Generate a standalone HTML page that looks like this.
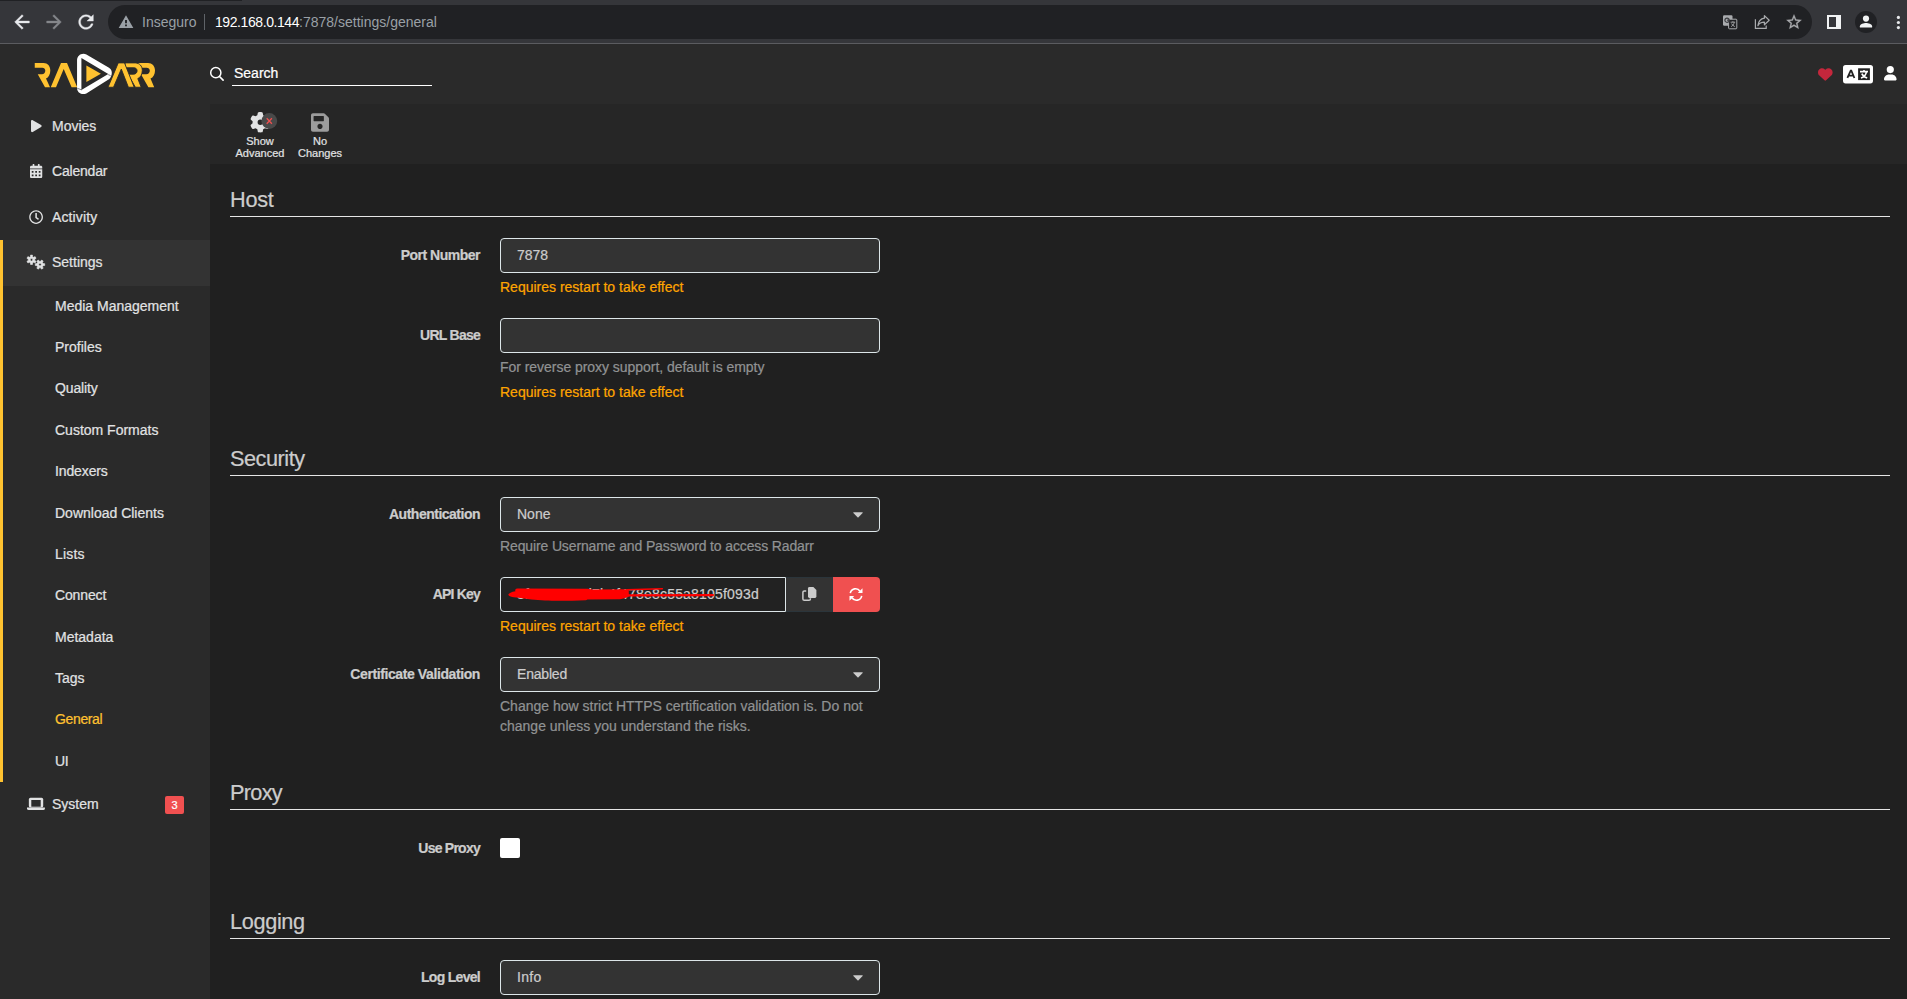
<!DOCTYPE html>
<html>
<head>
<meta charset="utf-8">
<title>General - Radarr</title>
<style>
*{box-sizing:border-box;margin:0;padding:0}
html,body{width:1907px;height:999px;overflow:hidden;background:#202020}
body{position:relative;font-family:"Liberation Sans",sans-serif;font-size:14px;color:#ccc;line-height:21px;-webkit-text-stroke:0.22px}
.abs{position:absolute}
svg{position:absolute;overflow:visible}
/* browser chrome */
#chrome{position:absolute;left:0;top:0;width:1907px;height:44px;background:#35363a}
#chrome .bline{position:absolute;left:0;top:43px;width:1907px;height:1px;background:#5b5c60}
#tabstrip{position:absolute;left:0;top:0;width:1907px;height:1px;background:transparent}
#tabstrip i{position:absolute;left:0;top:0;width:242px;height:1px;background:#202124}
#pill{position:absolute;left:108px;top:5px;width:1704px;height:34px;border-radius:17px;background:#202124}
.ctext{-webkit-text-stroke:0;position:absolute;top:11px;height:22px;line-height:22px;font-size:14px;white-space:nowrap}
/* app */
#header{position:absolute;left:0;top:44px;width:1907px;height:60px;background:#2a2a2a}
#sidebar{position:absolute;left:0;top:104px;width:210px;height:895px;background:#2a2a2a}
#toolbar{position:absolute;left:210px;top:104px;width:1697px;height:60px;background:#262626}
#content{position:absolute;left:210px;top:164px;width:1697px;height:835px;background:#202020}
.nav{position:absolute;left:52px;color:#e1e2e3;white-space:nowrap;line-height:21.4px;height:21.4px}
.sub{position:absolute;left:55px;color:#e1e2e3;white-space:nowrap;line-height:21.4px;height:21.4px}
.legend{position:absolute;left:230px;width:1660px;height:33px;border-bottom:1px solid #e5e5e5;font-size:21.7px;line-height:32px;color:#ccc;white-space:nowrap}
.label{margin-top:-1px;position:absolute;left:230px;width:250px;text-align:right;font-weight:bold;line-height:20px;height:20px;color:#ccc;white-space:nowrap;letter-spacing:-0.5px}
.input{position:absolute;left:500px;width:380px;height:35px;border:1px solid #dde6e9;border-radius:4px;background:#333;color:#ccc;padding:6px 16px;line-height:21px;white-space:nowrap}
.help{margin-top:-1px;position:absolute;left:500px;line-height:20px;height:20px;color:#909293;white-space:nowrap}
.warn{color:#ffa500}
.tbtxt{position:absolute;font-size:11px;line-height:12px;height:12px;color:#e1e2e3;text-align:center;width:60px;white-space:nowrap}
</style>
</head>
<body>
<div id="chrome">
  <div id="tabstrip"><i></i></div>
  <div class="bline"></div>
  <div id="pill"></div>
  <!-- back -->
  <svg style="left:11px;top:11px" width="22" height="22" viewBox="0 0 24 24"><path fill="#e8eaed" stroke="#e8eaed" stroke-width="0.45" d="M20 11H7.83l5.59-5.59L12 4l-8 8 8 8 1.41-1.41L7.83 13H20v-2z"/></svg>
  <!-- forward -->
  <svg style="left:43px;top:11px" width="22" height="22" viewBox="0 0 24 24"><path fill="#85878b" stroke="#85878b" stroke-width="0.45" d="M12 4l-1.41 1.41L16.17 11H4v2h12.17l-5.58 5.59L12 20l8-8z"/></svg>
  <!-- reload -->
  <svg style="left:75px;top:11px" width="22" height="22" viewBox="0 0 24 24"><path fill="#e8eaed" stroke="#e8eaed" stroke-width="0.4" d="M17.65 6.35C16.2 4.9 14.21 4 12 4c-4.42 0-7.99 3.58-7.99 8s3.57 8 7.99 8c3.73 0 6.84-2.55 7.73-6h-2.08c-.82 2.33-3.04 4-5.65 4-3.31 0-6-2.69-6-6s2.69-6 6-6c1.66 0 3.14.69 4.22 1.78L13 11h7V4l-2.35 2.35z"/></svg>
  <!-- warning -->
  <svg style="left:118px;top:13.7px" width="16" height="16" viewBox="0 0 24 24"><path fill="#9aa0a6" d="M1 21h22L12 2 1 21zm12.400-2.800h-2.800v-2.600h2.800v2.600zm0-4.400h-2.800v-4.800h2.800v4.800z"/></svg>
  <div class="ctext" style="left:142px;color:#9aa0a6">Inseguro</div>
  <div class="abs" style="left:204px;top:14px;width:1px;height:16px;background:#5f6368"></div>
  <div class="ctext" style="left:215px;color:#9aa0a6"><span style="color:#fff;letter-spacing:-0.42px">192.168.0.144</span>:7878/settings/general</div>
  <!-- translate -->
  <svg style="left:1722px;top:14px" width="16" height="16" viewBox="0 0 16 16">
    <rect x="1" y="1.2" width="9.5" height="10.6" rx="1.2" fill="#a9abae"/>
    <rect x="6.6" y="5.2" width="8.2" height="9.6" rx="0.8" fill="#202124" stroke="#a9abae" stroke-width="1"/>
    <circle cx="5" cy="6.2" r="2.1" fill="none" stroke="#3c3d41" stroke-width="1.2"/>
    <path d="M5 6.2h2.3" stroke="#3c3d41" stroke-width="1.1"/>
    <path d="M8.6 8.2h4.6M10.9 7.2v1M9.2 12.6c1.6-.9 2.7-2.4 3-4.2M9.6 9.6c.6 1.3 1.7 2.3 3.2 3" stroke="#a9abae" stroke-width="0.9" fill="none"/>
  </svg>
  <!-- share -->
  <svg style="left:1754px;top:14px" width="17" height="16" viewBox="0 0 17 16">
    <path d="M1.4 5.2V14.4H12.2V11.6" fill="none" stroke="#a9abae" stroke-width="1.2"/>
    <path d="M10.4 1.6L15.2 6.2 10.4 10.8V8.2C7.2 8.2 5.2 9.2 3.9 11.6 4.4 7.6 6.6 4.8 10.4 4.2Z" fill="none" stroke="#a9abae" stroke-width="1.2" stroke-linejoin="round"/>
  </svg>
  <!-- star -->
  <svg style="left:1785px;top:13.400px" width="18" height="18" viewBox="0 0 24 24"><path fill="#a9abae" stroke="#a9abae" stroke-width="0.400" d="M22 9.24l-7.19-.62L12 2 9.19 8.63 2 9.24l5.46 4.73L5.82 21 12 17.27 18.18 21l-1.63-7.03L22 9.24zM12 15.4l-3.76 2.27 1-4.28-3.32-2.88 4.38-.38L12 6.1l1.71 4.04 4.38.38-3.32 2.88 1 4.28L12 15.4z"/></svg>
  <!-- side panel -->
  <svg style="left:1827px;top:15px" width="14" height="14" viewBox="0 0 14 14"><rect x="1" y="1" width="12" height="12" fill="none" stroke="#f1f3f4" stroke-width="2"/><rect x="9" y="0" width="5" height="14" fill="#f1f3f4"/></svg>
  <!-- profile -->
  <svg style="left:1855px;top:11px" width="22" height="22" viewBox="0 0 22 22"><circle cx="11" cy="11" r="11" fill="#202124"/><circle cx="11" cy="7.6" r="3.1" fill="#f1f3f4"/><path d="M4.9 16.6v-1.3c0-2.1 4-3.2 6.1-3.2s6.100 1.100 6.100 3.200v1.300z" fill="#f1f3f4"/></svg>
  <!-- menu dots -->
  <svg style="left:1896px;top:15px" width="5" height="15" viewBox="0 0 5 15"><circle cx="2.4" cy="2.4" r="1.6" fill="#e8eaed"/><circle cx="2.4" cy="7.5" r="1.6" fill="#e8eaed"/><circle cx="2.4" cy="12.6" r="1.6" fill="#e8eaed"/></svg>
</div>
<div id="header"></div>
<!-- logo: coordinates are page pixels -->
<svg style="left:0;top:44px" width="210" height="60" viewBox="0 44 210 60">
  <g fill="#ffc230">
    <!-- R1 -->
    <path d="M34.75 62.9H43.6C47.6 62.9 50.3 66 50.3 70.4C50.3 74.3 48.6 77.4 46 78.6L50 87.25H45L37.75 74.2H42C43.9 74.2 45.3 72.7 45.3 70.8C45.3 69 44 67.75 42.3 67.75H34.75Z"/>
    <!-- A1 -->
    <path d="M61 62.9H67L77.2 87.25H71.6L63.7 69.1L56 87.25H50.75Z"/>
    <!-- R3 -->
    <path d="M138 62.9H148C152.100 62.900 155 66 155 70.400C155 74.300 153.200 77.400 150.500 78.600L154.200 87.250H148.400L141 74.200H146.300C148.300 74.200 149.800 72.700 149.800 70.800C149.800 69 148.400 67.750 146.600 67.750H138Z"/>
    <!-- R2 -->
    <path stroke="#2a2a2a" stroke-width="0.9" d="M125 62.9H135.300C139.400 62.900 142.300 66 142.300 70.400C142.300 74.300 140.500 77.400 137.800 78.600L141.200 87.250H135.400L128 74.200H133.600C135.600 74.200 137.100 72.700 137.100 70.800C137.100 69 135.700 67.750 133.900 67.750H125Z"/>
    <!-- A2 -->
    <path stroke="#2a2a2a" stroke-width="0.9" d="M118.250 62.900H124.500L134.200 87.250H128.400L121.300 69.100L113.500 87.250H108Z"/>
  </g>
  <!-- white rounded triangle (outer minus inner) -->
  <path fill="#ffffff" fill-rule="evenodd" d="M77.05 88V60.6C77.05 56.6 79.9 53.85 83.4 53.85C84.5 53.85 85.5 54.1 86.4 54.6L109 67.8C110.8 68.9 111.8 70.6 111.8 72.7C111.8 74.9 110.9 77.4 109.3 78.9L87.9 92.4C86.5 93.4 85 94.1 83.4 94.1C79.9 94.1 77.05 91.6 77.05 88Z M81.4 58.1L108.3 74L81.4 90.1Z"/>
  <path d="M77.3 88.3L81.8 89.9M110.6 75.6L108.2 74.6" stroke="#2a2a2a" stroke-width="0.6" fill="none"/>
  <!-- inner play -->
  <path d="M86.4 65.6L100.9 73.7L86.4 82.1Z" fill="#ffc230"/>
</svg>
<!-- search -->
<svg style="left:209px;top:66px" width="16" height="16" viewBox="0 0 16 16"><circle cx="6.800" cy="6.700" r="5.100" fill="none" stroke="#fff" stroke-width="1.500"/><path d="M10.500 10.500L14.100 14.100" stroke="#fff" stroke-width="1.700" stroke-linecap="round"/></svg>
<div class="abs" style="left:234px;top:63px;line-height:21px;color:#fff;white-space:nowrap">Search</div>
<div class="abs" style="left:232px;top:85px;width:200px;height:1px;background:#fff"></div>
<!-- heart -->
<svg style="left:1817.700px;top:66.600px" width="14.600" height="14.600" viewBox="0 0 512 512"><path fill="#c4273c" d="M47.600 300.400L228.300 469.100c7.500 7 17.400 10.900 27.700 10.900s20.200-3.900 27.700-10.900L464.400 300.400c30.400-28.300 47.600-68 47.600-109.500v-5.800c0-69.900-50.500-129.500-119.400-141C347 36.500 300.600 51.400 268 84L256 96 244 84c-32.600-32.600-79-47.500-124.600-39.900C50.500 55.600 0 115.200 0 185.100v5.800c0 41.500 17.200 81.200 47.600 109.500z"/></svg>
<!-- language -->
<svg style="left:1843px;top:64.700px" width="30" height="18.400" viewBox="0 0 30 18.400">
  <rect x="0" y="0" width="30" height="18.400" rx="2.600" fill="#fff"/>
  <rect x="15.100" y="3.300" width="11.800" height="11.800" fill="#222"/>
  <path d="M4.400 13L7.700 5.700H8.300L11.400 13M5.600 10.700H10.300" fill="none" stroke="#222" stroke-width="1.800"/>
  <path d="M17 6.600H25M21 5V6.600M18 13C21 12 23 9.600 23.400 6.800M18.800 8.600C19.700 10.600 21.600 12.200 24.200 13" fill="none" stroke="#fff" stroke-width="1.600"/>
</svg>
<!-- user -->
<svg style="left:1883.600px;top:65.700px" width="12.600" height="14.400" viewBox="0 0 448 512"><path fill="#fff" d="M224 256A128 128 0 1 0 224 0a128 128 0 1 0 0 256zm-45.700 48C79.800 304 0 383.800 0 482.300C0 498.700 13.300 512 29.700 512H418.300c16.400 0 29.700-13.300 29.700-29.700C448 383.800 368.200 304 269.700 304H178.300z"/></svg>

<div id="sidebar"></div>
<div class="abs" style="left:0;top:240px;width:210px;height:46px;background:#333"></div>
<div class="abs" style="left:0;top:240px;width:3px;height:542px;background:#ffc230"></div>
<!-- play -->
<svg style="left:31px;top:119.900px" width="10.700" height="12.200" viewBox="0 0 448 512"><path fill="#e1e2e3" d="M424.400 214.700L72.400 6.600C43.800-10.300 0 6.100 0 47.900V464c0 37.500 40.700 60.100 72.400 41.300l352-208c31.400-18.500 31.500-64.100 0-82.600z"/></svg>
<div class="nav" style="top:116px">Movies</div>
<!-- calendar -->
<svg style="left:29.900px;top:164px" width="12.250" height="14" viewBox="0 0 448 512"><path fill="#e1e2e3" d="M0 464c0 26.500 21.500 48 48 48h352c26.500 0 48-21.500 48-48V192H0v272zm320-196c0-6.600 5.400-12 12-12h40c6.600 0 12 5.400 12 12v40c0 6.600-5.400 12-12 12h-40c-6.600 0-12-5.400-12-12v-40zm0 128c0-6.600 5.400-12 12-12h40c6.600 0 12 5.400 12 12v40c0 6.600-5.400 12-12 12h-40c-6.600 0-12-5.400-12-12v-40zM192 268c0-6.600 5.400-12 12-12h40c6.600 0 12 5.400 12 12v40c0 6.600-5.400 12-12 12h-40c-6.600 0-12-5.400-12-12v-40zm0 128c0-6.600 5.400-12 12-12h40c6.600 0 12 5.400 12 12v40c0 6.600-5.400 12-12 12h-40c-6.600 0-12-5.400-12-12v-40zM64 268c0-6.600 5.400-12 12-12h40c6.600 0 12 5.400 12 12v40c0 6.600-5.400 12-12 12H76c-6.600 0-12-5.400-12-12v-40zm0 128c0-6.600 5.400-12 12-12h40c6.600 0 12 5.400 12 12v40c0 6.600-5.400 12-12 12H76c-6.600 0-12-5.400-12-12v-40zM400 64h-48V16c0-8.800-7.200-16-16-16h-32c-8.800 0-16 7.200-16 16v48H160V16c0-8.800-7.200-16-16-16h-32c-8.800 0-16 7.200-16 16v48H48C21.500 64 0 85.500 0 112v48h448v-48c0-26.500-21.500-48-48-48z"/></svg>
<div class="nav" style="top:161.400px;letter-spacing:-0.2px">Calendar</div>
<!-- clock -->
<svg style="left:28.800px;top:209.900px" width="14.200" height="14.200" viewBox="0 0 512 512"><path fill="#e1e2e3" d="M256 8C119 8 8 119 8 256s111 248 248 248 248-111 248-248S393 8 256 8zm0 448c-110.500 0-200-89.500-200-200S145.500 56 256 56s200 89.500 200 200-89.500 200-200 200zm61.800-104.400l-84.900-61.700c-3.100-2.300-4.900-5.900-4.900-9.700V116c0-6.600 5.400-12 12-12h32c6.600 0 12 5.400 12 12v141.700l66.800 48.600c5.400 3.900 6.500 11.400 2.600 16.800L334.600 349c-3.900 5.300-11.400 6.500-16.800 2.600z"/></svg>
<div class="nav" style="top:206.800px;letter-spacing:0.13px">Activity</div>
<!-- cogs -->
<svg style="left:0;top:240px" width="60" height="46" viewBox="0 240 60 46"><path fill="#e1e2e3" fill-rule="evenodd" stroke="#e1e2e3" stroke-width="0.600" stroke-linejoin="round" d="M30.45 256.67 L30.54 255.10 L32.46 255.10 L32.55 256.67 L33.68 257.32 L35.09 256.62 L36.05 258.28 L34.73 259.15 L34.73 260.45 L36.05 261.32 L35.09 262.98 L33.68 262.28 L32.55 262.93 L32.46 264.50 L30.54 264.50 L30.45 262.93 L29.32 262.28 L27.91 262.98 L26.95 261.32 L28.27 260.45 L28.27 259.15 L26.95 258.28 L27.91 256.62 L29.32 257.32Z M30.25 259.80a1.25 1.25 0 1 0 2.5 0a1.25 1.25 0 1 0 -2.5 0Z"/><path fill="#e1e2e3" fill-rule="evenodd" stroke="#e1e2e3" stroke-width="0.600" stroke-linejoin="round" d="M43.13 263.55 L44.70 263.64 L44.70 265.56 L43.13 265.65 L42.48 266.78 L43.18 268.19 L41.52 269.15 L40.65 267.83 L39.35 267.83 L38.48 269.15 L36.82 268.19 L37.52 266.78 L36.87 265.65 L35.30 265.56 L35.30 263.64 L36.87 263.55 L37.52 262.42 L36.82 261.01 L38.48 260.05 L39.35 261.37 L40.65 261.37 L41.52 260.05 L43.18 261.01 L42.48 262.42Z M38.75 264.60a1.25 1.25 0 1 0 2.5 0a1.25 1.25 0 1 0 -2.5 0Z"/></svg>
<div class="nav" style="top:252.200px">Settings</div>
<div class="sub" style="top:295.6px">Media Management</div>
<div class="sub" style="top:337.0px">Profiles</div>
<div class="sub" style="top:378.4px;letter-spacing:-0.14px">Quality</div>
<div class="sub" style="top:419.8px">Custom Formats</div>
<div class="sub" style="top:461.2px;letter-spacing:-0.12px">Indexers</div>
<div class="sub" style="top:502.6px">Download Clients</div>
<div class="sub" style="top:544.0px;letter-spacing:0.2px">Lists</div>
<div class="sub" style="top:585.4px;letter-spacing:-0.14px">Connect</div>
<div class="sub" style="top:626.8px">Metadata</div>
<div class="sub" style="top:668.2px">Tags</div>
<div class="sub" style="top:708.6px;color:#ffc230;letter-spacing:-0.36px">General</div>
<div class="sub" style="top:751.0px;letter-spacing:-0.3px">UI</div>

<!-- laptop -->
<svg style="left:0;top:790px" width="60" height="30" viewBox="0 790 60 30">
  <rect x="28.850" y="797.800" width="14.350" height="9.800" rx="1.600" fill="#e1e2e3"/>
  <rect x="31.300" y="800" width="9.400" height="6.700" fill="#2a2a2a"/>
  <path d="M27 807.500H44.900V808.400Q44.900 810.100 43.200 810.100H28.700Q27 810.100 27 808.400Z" fill="#e1e2e3"/>
</svg>
<div class="nav" style="top:794.400px">System</div>
<div class="abs" style="left:165px;top:796px;width:19px;height:18px;border-radius:2px;background:#f05050;color:#fff;font-size:11px;line-height:18px;text-align:center">3</div>
<div id="toolbar"></div>
<div id="content"></div>
<!-- toolbar: show advanced -->
<svg style="left:249.950px;top:112.150px" width="20.500" height="20.500" viewBox="0 0 512 512"><path fill="#e1e2e3" d="M495.9 166.6c3.2 8.7 .5 18.4-6.4 24.6l-43.3 39.4c1.1 8.300 1.700 16.800 1.700 25.400s-.6 17.100-1.700 25.400l43.300 39.400c6.900 6.200 9.600 15.900 6.400 24.600c-4.400 11.900-9.700 23.300-15.800 34.300l-4.700 8.100c-6.600 11-14 21.400-22.100 31.200c-5.900 7.200-15.700 9.600-24.500 6.800l-55.700-17.700c-13.400 10.300-28.200 18.900-44 25.400l-12.500 57.100c-2 9.100-9 16.300-18.200 17.800c-13.800 2.300-28 3.500-42.500 3.500s-28.700-1.200-42.500-3.500c-9.200-1.500-16.200-8.700-18.200-17.800l-12.500-57.100c-15.800-6.500-30.600-15.100-44-25.400L83.100 425.900c-8.800 2.800-18.600 .3-24.500-6.800c-8.100-9.800-15.500-20.200-22.100-31.200l-4.700-8.100c-6.100-11-11.400-22.400-15.800-34.300c-3.200-8.700-.5-18.400 6.400-24.600l43.300-39.400C64.600 273.100 64 264.600 64 256s.6-17.100 1.700-25.400L22.400 191.200c-6.900-6.200-9.600-15.900-6.400-24.600c4.400-11.900 9.700-23.300 15.800-34.300l4.700-8.100c6.600-11 14-21.400 22.100-31.200c5.900-7.200 15.700-9.600 24.500-6.800l55.700 17.700c13.400-10.300 28.200-18.900 44-25.400l12.500-57.100c2-9.100 9-16.300 18.200-17.800C227.300 1.200 241.500 0 256 0s28.700 1.200 42.500 3.500c9.200 1.500 16.200 8.700 18.200 17.800l12.500 57.100c15.800 6.500 30.600 15.100 44 25.400l55.700-17.700c8.800-2.800 18.600-.3 24.500 6.800c8.100 9.800 15.500 20.200 22.100 31.200l4.700 8.100c6.100 11 11.400 22.400 15.800 34.300zM256 322a66 66 0 1 0 0-132 66 66 0 1 0 0 132z"/></svg>
<svg style="left:261px;top:113px" width="17" height="17" viewBox="0 0 17 17"><circle cx="8.300" cy="8" r="7.900" fill="#494949"/><path d="M5.700 5.300L10.900 10.700M10.900 5.300L5.700 10.700" stroke="#f05050" stroke-width="1.300" fill="none"/></svg>
<div class="tbtxt" style="left:230px;top:135.100px">Show</div>
<div class="tbtxt" style="left:230px;top:147.100px">Advanced</div>
<!-- toolbar: save -->
<svg style="left:310.900px;top:111.700px" width="18" height="21" viewBox="0 0 448 512" preserveAspectRatio="none"><path fill="#9c9c9c" d="M433.941 129.941l-83.882-83.882A48 48 0 0 0 316.118 32H48C21.490 32 0 53.490 0 80v352c0 26.510 21.490 48 48 48h352c26.510 0 48-21.490 48-48V163.882a48 48 0 0 0-14.059-33.941zM224 416c-35.346 0-64-28.654-64-64 0-35.346 28.654-64 64-64s64 28.654 64 64c0 35.346-28.654 64-64 64zm96-304.520V212c0 6.627-5.373 12-12 12H76c-6.627 0-12-5.373-12-12V108c0-6.627 5.373-12 12-12h228.520c3.183 0 6.235 1.264 8.485 3.515l3.480 3.480A11.996 11.996 0 0 1 320 111.480z"/></svg>
<div class="tbtxt" style="left:290px;top:135.100px">No</div>
<div class="tbtxt" style="left:290px;top:147.100px">Changes</div>

<!-- HOST -->
<div class="legend" style="top:184px;letter-spacing:-0.28px">Host</div>
<div class="label" style="top:246px">Port Number</div>
<div class="input" style="top:238px">7878</div>
<div class="help warn" style="top:278px">Requires restart to take effect</div>
<div class="label" style="top:326px;letter-spacing:-0.75px">URL Base</div>
<div class="input" style="top:318px"></div>
<div class="help" style="top:358px;letter-spacing:-0.04px">For reverse proxy support, default is empty</div>
<div class="help warn" style="top:383px">Requires restart to take effect</div>

<!-- SECURITY -->
<div class="legend" style="top:443px;letter-spacing:-0.46px">Security</div>
<div class="label" style="top:505px">Authentication</div>
<div class="input" style="top:497px">None<svg style="left:352.400px;top:14.300px" width="10" height="6" viewBox="0 0 10 6"><path d="M0.600 0.300H9.400Q10 0.500 9.600 1L5.500 5.300Q5 5.700 4.500 5.300L0.400 1Q0 0.500 0.600 0.300Z" fill="#ccc"/></svg></div>
<div class="help" style="top:537px;letter-spacing:-0.13px">Require Username and Password to access Radarr</div>
<div class="label" style="top:585px;letter-spacing:-0.8px">API Key</div>
<div class="input" style="top:577px;width:286px;background:#222;border-radius:4px 0 0 4px;letter-spacing:0.19px">3f9a1c2e0d7b4f478e8c55a8105f093d</div>
<div class="abs" style="left:786px;top:577px;width:47px;height:35px;background:#333;border:1px solid #2b353b;border-left:0"></div>
<div class="abs" style="left:833px;top:577px;width:47px;height:35px;background:#f05050;border-radius:0 4px 4px 0"></div>
<!-- copy icon -->
<svg style="left:801.800px;top:587px" width="14.600" height="14.200" viewBox="0 0 14.600 14.200">
  <path d="M4.200 3.900H2.300Q0.900 3.900 0.900 5.300V11.900Q0.900 13.300 2.300 13.300H7Q8.400 13.300 8.400 11.900V11.300" fill="none" stroke="#ccc" stroke-width="1.500"/>
  <path d="M7.400 0H11.400L14.400 3V9.600Q14.400 11 13 11H7.400Q6 11 6 9.600V1.400Q6 0 7.400 0Z" fill="#ccc"/>
</svg>
<!-- sync icon -->
<svg style="left:849px;top:587.500px" width="14" height="13" viewBox="0 0 14 13">
  <path d="M1.300 5.200A5.300 5.300 0 0 1 11 3.200" fill="none" stroke="#fff" stroke-width="1.600"/>
  <path d="M13.500 0.300V5H8.800Z" fill="#fff"/>
  <path d="M12.700 7.800A5.300 5.300 0 0 1 3 9.800" fill="none" stroke="#fff" stroke-width="1.600"/>
  <path d="M0.500 12.700V8H5.200Z" fill="#fff"/>
</svg>
<!-- red scribble -->
<svg style="left:500px;top:577px" width="290" height="35" viewBox="500 577 290 35">
  <g fill="#ff0000">
  <path d="M508.300 594.800C508.600 593.200 511.500 592 515.500 591.300C514.600 589.800 515.500 588.700 517.500 588.500L588 588.700L592 589.500L628.700 589.300L628.900 596.500C626 597.800 623 598.700 620 599.200L587.500 599.400L586 600.200C570 600.800 555 600.800 545 600.500C535 600.100 527 599.300 521 598.100C514 597.600 508.600 596.800 508.300 594.800Z"/>
  <path d="M627 589.100L662.400 588.100C663.400 588.300 663.400 589.300 662.400 589.500L627 590.600Z"/>
  <path d="M627 594.200L713.400 594.100C714.200 594.500 714.200 595.800 713.400 596.200L627 596.500Z"/>
  </g>
</svg>
<div class="help warn" style="top:617px">Requires restart to take effect</div>
<div class="label" style="top:665px;letter-spacing:-0.4px">Certificate Validation</div>
<div class="input" style="top:657px;letter-spacing:-0.2px">Enabled<svg style="left:352.400px;top:14.300px" width="10" height="6" viewBox="0 0 10 6"><path d="M0.600 0.300H9.400Q10 0.500 9.600 1L5.500 5.300Q5 5.700 4.500 5.300L0.400 1Q0 0.500 0.600 0.300Z" fill="#ccc"/></svg></div>
<div class="help" style="top:697px">Change how strict HTTPS certification validation is. Do not</div>
<div class="help" style="top:717px">change unless you understand the risks.</div>

<!-- PROXY -->
<div class="legend" style="top:777px;letter-spacing:-0.7px">Proxy</div>
<div class="label" style="top:839px;letter-spacing:-0.75px">Use Proxy</div>
<div class="abs" style="left:500px;top:838px;width:20px;height:20px;border-radius:2px;background:#fff"></div>

<!-- LOGGING -->
<div class="legend" style="top:906px;letter-spacing:-0.34px">Logging</div>
<div class="label" style="top:968px;letter-spacing:-0.7px">Log Level</div>
<div class="input" style="top:960px;letter-spacing:0.3px">Info<svg style="left:352.400px;top:14.300px" width="10" height="6" viewBox="0 0 10 6"><path d="M0.600 0.300H9.400Q10 0.500 9.600 1L5.500 5.300Q5 5.700 4.500 5.300L0.400 1Q0 0.500 0.600 0.300Z" fill="#ccc"/></svg></div>
</body>
</html>
